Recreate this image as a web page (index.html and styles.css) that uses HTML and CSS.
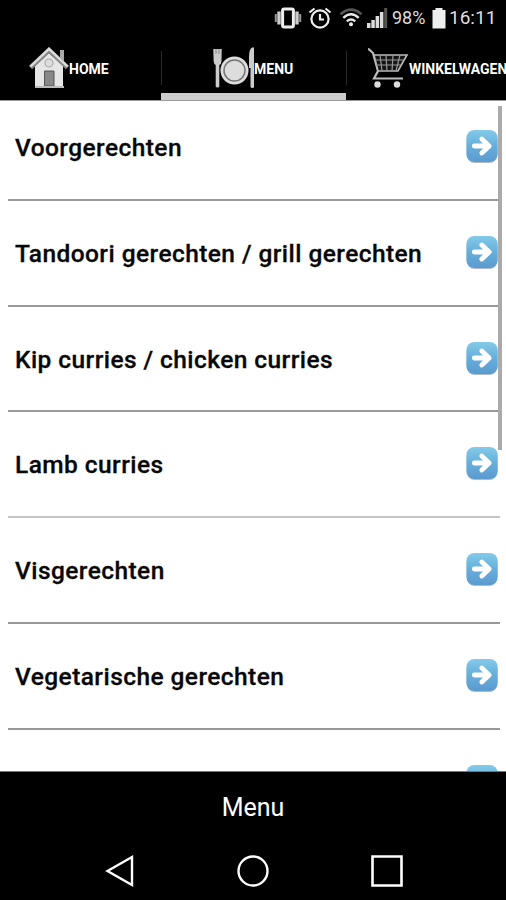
FILE: index.html
```html
<!DOCTYPE html>
<html lang="nl">
<head>
<meta charset="utf-8">
<title>Menu</title>
<link rel="stylesheet" href="styles.css">
</head>
<body>
<svg class="defs" width="0" height="0" aria-hidden="true">
  <defs>
    <linearGradient id="blue" x1="0" y1="0" x2="0" y2="1">
      <stop offset="0" stop-color="#83cbe9"/>
      <stop offset=".5" stop-color="#67aedb"/>
      <stop offset="1" stop-color="#5b9bd0"/>
    </linearGradient>
    <symbol id="go" viewBox="0 0 32 34">
      <rect x=".8" y="1.500" width="30.500" height="31.500" rx="8" fill="#8a9eae" opacity=".7"/>
      <rect x=".4" y="0" width="31.300" height="32" rx="8" fill="url(#blue)"/>
      <path d="M8.300 16H22M15.800 9l7.400 7-7.400 7" fill="none" stroke="#fff" stroke-width="4.800" stroke-linecap="round" stroke-linejoin="round"/>
    </symbol>
  </defs>
</svg>
<div class="phone">
  <header class="status">
    <svg class="vibrate" width="28" height="22" viewBox="0 0 28 22">
      <path d="M1.800 7v8M26.200 7v8" stroke="#999" stroke-width="2"/>
      <path d="M5 4.500v13M23 4.500v13" stroke="#ccc" stroke-width="3.400"/>
      <rect x="8.600" y="2" width="10.800" height="18" rx="1.500" fill="#000" stroke="#eee" stroke-width="3"/>
    </svg>
    <svg class="alarm" width="24" height="22" viewBox="0 0 24 22">
      <circle cx="12" cy="12" r="8.600" fill="none" stroke="#eee" stroke-width="2.200"/>
      <path d="M1.500 5.500l5-4M22.500 5.500l-5-4M12 7v5.500h4" fill="none" stroke="#eee" stroke-width="2.200"/>
    </svg>
    <svg class="wifi" width="24" height="19" viewBox="0 0 24 19">
      <path d="M1.500 6.200Q12-3 22.500 6.200" fill="none" stroke="#555" stroke-width="2.600"/>
      <path d="M4.300 9.800Q12 2.800 19.700 9.800M7.800 13.300q4.200-3.600 8.400 0" fill="none" stroke="#e8e8e8" stroke-width="2.400"/>
      <circle cx="12" cy="16.300" r="2" fill="#eee"/>
    </svg>
    <svg class="signal" width="21" height="20" viewBox="0 0 21 20">
      <path d="M0 15h3.500v5H0zM4.300 12h3.500v8h-3.500zM8.600 8h3.500v12h-3.500zM12.900 4h3.500v16h-3.500z" fill="#ddd"/>
      <path d="M17.200 0h3v20h-3z" fill="#555"/>
    </svg>
    <span class="percent">98%</span>
    <svg class="battery" width="14" height="21" viewBox="0 0 14 21"><path d="M3.500 0h7v2H13.500v18.500H.5V2h3z" fill="#eee"/></svg>
    <span class="clock">16:11</span>
  </header>
  <nav class="tabs">
    <a class="tab home">
      <svg width="40" height="42" viewBox="0 0 40 42">
        <path d="M31 3h4v12l-4-4z" fill="#aaa"/>
        <path d="M6 19L20 6l14 13v21H6z" fill="#e6e6e6"/>
        <path d="M1.500 20.500L20 3l18.500 17.500" fill="none" stroke="#888" stroke-width="4.600"/>
        <path d="M1.500 19.500L20 2l18.500 17.500" fill="none" stroke="#ddd" stroke-width="2.400"/>
        <circle cx="20" cy="16" r="4" fill="#ddd" stroke="#aaa" stroke-width="1.200"/>
        <path d="M15.500 39V24h9.500v15z" fill="#888" stroke="#555"/>
        <path d="M6 40h29" stroke="#bbb" stroke-width="2"/>
      </svg>
      <span>HOME</span>
    </a>
    <a class="tab menu">
      <svg width="41" height="42" viewBox="0 0 41 42">
        <path d="M.3 2h8.400l-.2 12q0 3-2.200 4v21.500q0 1-1.800 1t-1.800-1V18Q.8 17 .6 14z" fill="#ccc"/>
        <path d="M3 2v5M6 2v5" stroke="#777" stroke-width=".8"/>
        <path d="M36 10q0-8 3-9.500h2V40q0 1-1.500 1T37.500 40V21H36z" fill="#ccc"/>
        <circle cx="21.500" cy="23.500" r="14" fill="#ddd"/>
        <circle cx="21.500" cy="23.500" r="10.500" fill="#ddd" stroke="#777" stroke-width="1.500"/>
      </svg>
      <span>MENU</span>
    </a>
    <a class="tab cart">
      <svg width="41" height="42" viewBox="0 0 41 42">
        <path d="M0 1.500l5 4.500 5 18-4 7.500h29" fill="none" stroke="#bbb" stroke-width="2.200"/>
        <path d="M6 8h33l-9 16H10z" fill="#151515" stroke="#bbb" stroke-width="1.600"/>
        <path d="M12 8l2 16M18 8l1 16M25 8l-1 16M32 8l-4 16M7 13h29M8 18h25" stroke="#999" stroke-width="1.200"/>
        <circle cx="9.500" cy="37.500" r="3.200" fill="#ddd"/><circle cx="29" cy="37.500" r="3.200" fill="#ddd"/>
      </svg>
      <span>WINKELWAGEN</span>
    </a>
  </nav>
  <main class="list">
    <div class="row"><span>Voorgerechten</span><svg><use href="#go"/></svg></div>
    <div class="row"><span>Tandoori gerechten / grill gerechten</span><svg><use href="#go"/></svg></div>
    <div class="row"><span>Kip curries / chicken curries</span><svg><use href="#go"/></svg></div>
    <div class="row soft"><span>Lamb curries</span><svg><use href="#go"/></svg></div>
    <div class="row"><span>Visgerechten</span><svg><use href="#go"/></svg></div>
    <div class="row"><span>Vegetarische gerechten</span><svg><use href="#go"/></svg></div>
    <div class="row"><span></span><svg><use href="#go"/></svg></div>
    <div class="scrollbar"></div>
  </main>
  <div class="title">Menu</div>
  <footer class="keys">
    <svg width="30" height="34" viewBox="0 0 30 34"><path d="M2.500 17L27 3v28z" fill="none" stroke="#fff" stroke-width="2.400"/></svg>
    <svg width="34" height="34" viewBox="0 0 34 34"><circle cx="17" cy="17" r="14.500" fill="none" stroke="#fff" stroke-width="2.400"/></svg>
    <svg width="34" height="34" viewBox="0 0 34 34"><path d="M2.500 2.500h29v29h-29z" fill="none" stroke="#fff" stroke-width="2.600"/></svg>
  </footer>
</div>
</body>
</html>
```

FILE: styles.css
```css
* { box-sizing: border-box; }
body { margin: 0; background: #000; font-family: Roboto, sans-serif; }
svg { display: block; flex: none; }
.defs { position: absolute; }
.phone { width: 506px; height: 900px; display: flex; flex-direction: column; overflow: hidden; background: #000; }

.status { height: 36px; flex: none; display: flex; align-items: center; padding-left: 274px; color: #ddd; font-size: 19px; line-height: 36px; white-space: nowrap; }
.alarm { margin-left: 6px; }
.wifi { margin-left: 7px; margin-top: -2px; }
.signal { margin-left: 4px; }
.percent { width: 35px; margin-left: 4px; font-size: 18px; }
.battery { margin-left: 5px; }
.clock { margin-left: 3px; }

.tabs { height: 65px; display: flex; flex: none; border-bottom: 1px solid #999; }
.tab { position: relative; height: 64px; flex: none; display: flex; align-items: flex-start; padding-top: 11px; color: #fff; font-size: 14px; font-weight: 700; white-space: nowrap; }
.tab span { line-height: 44px; }
.tab + .tab::before { content: ""; position: absolute; left: 0; top: 15px; width: 1px; height: 34px; background: #2a2a2a; }
.home { width: 161px; padding-left: 29px; }
.menu { width: 185px; padding-left: 52px; border-bottom: 7px solid #ccc; }
.cart { width: 220px; padding-left: 22px; }

.list { position: relative; height: 671px; flex: none; overflow: hidden; background: #fff; padding: 0 6px 0 8px; border-bottom: 1px solid #777; }
.row { height: 105.8px; display: flex; justify-content: space-between; align-items: flex-start; padding: 34px 2px 0 7px; border-bottom: 2px solid #999; font-size: 24.5px; letter-spacing: .43px; line-height: 38px; font-weight: 500; color: #080808; -webkit-text-stroke: .3px #080808; white-space: nowrap; }
.row:first-child { margin-top: -6px; }
.row svg { width: 32px; height: 34px; margin-top: 1px; }
.row.soft { border-bottom-color: #c4c4c4; }
.scrollbar { position: absolute; right: 4px; top: 5px; width: 4px; height: 344px; background: #aaa; }

.title { height: 82px; flex: none; color: #fff; font-size: 25px; line-height: 72px; text-align: center; }
.keys { height: 46px; flex: none; display: flex; align-items: flex-start; padding-left: 105px; }
.keys svg + svg { margin-left: 101px; }
.keys svg:nth-child(3) { margin-left: 100px; }
```
